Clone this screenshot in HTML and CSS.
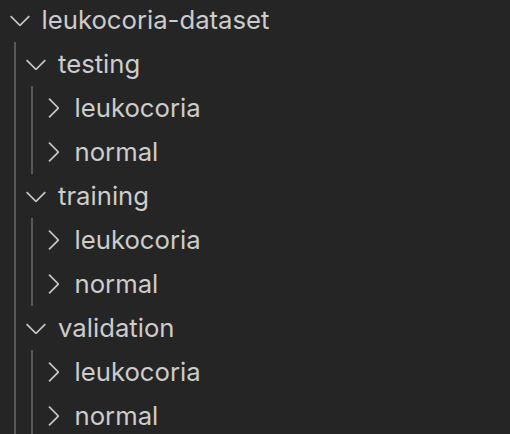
FILE: index.html
```html
<!DOCTYPE html>
<html>
<head>
<meta charset="utf-8">
<link rel="stylesheet" href="styles.css">
</head>
<body>
<div class="tree">
  <div class="row"><svg class="twistie" viewBox="0 0 16 16"><path d="M7.976 10.072l4.357-4.357.62.618L8.284 11h-.618L3 6.333l.619-.618 4.357 4.357z"/></svg><span class="label">leukocoria-dataset</span></div>
  <div class="children">
    <div class="row"><svg class="twistie" viewBox="0 0 16 16"><path d="M7.976 10.072l4.357-4.357.62.618L8.284 11h-.618L3 6.333l.619-.618 4.357 4.357z"/></svg><span class="label">testing</span></div>
    <div class="children">
      <div class="row"><svg class="twistie" viewBox="0 0 16 16"><path d="M10.072 8.024L5.715 3.667l.618-.62L11 7.716v.618L6.333 13l-.618-.619 4.357-4.357z"/></svg><span class="label">leukocoria</span></div>
      <div class="row"><svg class="twistie" viewBox="0 0 16 16"><path d="M10.072 8.024L5.715 3.667l.618-.62L11 7.716v.618L6.333 13l-.618-.619 4.357-4.357z"/></svg><span class="label">normal</span></div>
    </div>
    <div class="row"><svg class="twistie" viewBox="0 0 16 16"><path d="M7.976 10.072l4.357-4.357.62.618L8.284 11h-.618L3 6.333l.619-.618 4.357 4.357z"/></svg><span class="label">training</span></div>
    <div class="children">
      <div class="row"><svg class="twistie" viewBox="0 0 16 16"><path d="M10.072 8.024L5.715 3.667l.618-.62L11 7.716v.618L6.333 13l-.618-.619 4.357-4.357z"/></svg><span class="label">leukocoria</span></div>
      <div class="row"><svg class="twistie" viewBox="0 0 16 16"><path d="M10.072 8.024L5.715 3.667l.618-.62L11 7.716v.618L6.333 13l-.618-.619 4.357-4.357z"/></svg><span class="label">normal</span></div>
    </div>
    <div class="row"><svg class="twistie" viewBox="0 0 16 16"><path d="M7.976 10.072l4.357-4.357.62.618L8.284 11h-.618L3 6.333l.619-.618 4.357 4.357z"/></svg><span class="label">validation</span></div>
    <div class="children">
      <div class="row"><svg class="twistie" viewBox="0 0 16 16"><path d="M10.072 8.024L5.715 3.667l.618-.62L11 7.716v.618L6.333 13l-.618-.619 4.357-4.357z"/></svg><span class="label">leukocoria</span></div>
      <div class="row"><svg class="twistie" viewBox="0 0 16 16"><path d="M10.072 8.024L5.715 3.667l.618-.62L11 7.716v.618L6.333 13l-.618-.619 4.357-4.357z"/></svg><span class="label">normal</span></div>
    </div>
  </div>
</div>
</body>
</html>
```
FILE: styles.css
```css
html, body {
  margin: 0;
  padding: 0;
  background: #252526;
  height: 100%;
  overflow: hidden;
}
.tree {
  margin-top: -2px;
  font-family: Inter, "Noto Sans", sans-serif;
  font-size: 25.7px;
  color: #cccccc;
}
.row {
  height: 44px;
  display: flex;
  align-items: center;
  padding-left: 3.5px;
  white-space: nowrap;
}
.twistie {
  width: 32px;
  height: 32px;
  flex: none;
  fill: #c5c5c5;
  margin-right: 6px;
}
.label {
  line-height: 44px;
}
.children {
  margin-left: 14px;
  border-left: 2px solid #585858;
  padding-left: 0.5px;
}
```
